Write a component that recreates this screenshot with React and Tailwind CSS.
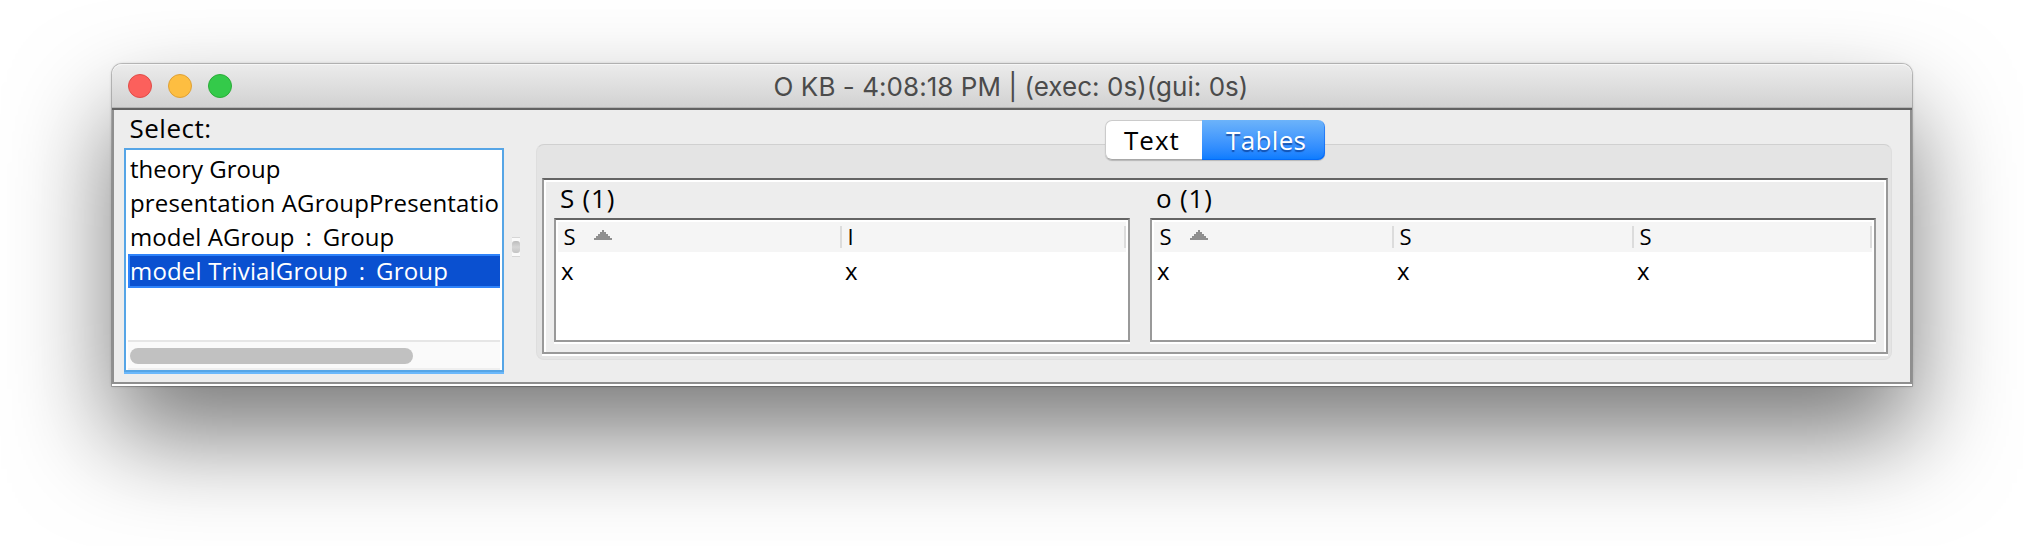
const items = [
  { label: "theory Group", cls: "" },
  { label: "presentation AGroupPresentatio", cls: "tracking-[0.17px]" },
  { label: "model AGroup", type: "Group", cls: "tracking-[0.1px]" },
  { label: "model TrivialGroup", type: "Group", cls: "tracking-[0.17px]", selected: true },
];

const tables = [
  {
    title: "S (1)",
    width: "w-[576px]",
    columns: [
      { name: "S", value: "x", width: "w-[284px]", sorted: true },
      { name: "I", value: "x", width: "w-[284px]" },
    ],
  },
  {
    title: "o (1)",
    width: "w-[726px]",
    columns: [
      { name: "S", value: "x", width: "w-[240px]", sorted: true },
      { name: "S", value: "x", width: "w-[240px]" },
      { name: "S", value: "x", width: "w-[238px]" },
    ],
  },
];

function TitleBar() {
  return (
    <div className="grid h-[46px] w-full shrink-0 grid-cols-[1fr_auto_1fr] items-center rounded-t-[10px] border-b-2 border-[#626262] bg-linear-to-b from-[#ececec] to-[#d1d1d1] shadow-[inset_0_1px_0_#f6f6f6,inset_0_-1px_0_#b4b4b4]">
      <div className="flex gap-4 pl-4">
        <span className="size-6 rounded-full border border-[#e04c48] bg-[#fc605c]" />
        <span className="size-6 rounded-full border border-[#dfa136] bg-[#fdbe41]" />
        <span className="size-6 rounded-full border border-[#2bac38] bg-[#34ca4a]" />
      </div>
      <div className="whitespace-nowrap pt-px pr-[2px] font-['Inter',sans-serif] text-[26px] leading-[40px] tracking-[0.05px] text-[#4b4b4b]">
        O KB - 4:08:18 PM | (exec: 0s)(gui: 0s)
      </div>
      <div />
    </div>
  );
}

function SelectPane() {
  return (
    <div className="flex w-[380px] shrink-0 flex-col">
      <div className="mb-[2px] h-9 pl-[5.5px] text-[26px] leading-9 tracking-[0.5px]">Select:</div>
      <div className="flex h-[224px] flex-col border-2 border-[#56a5e6] bg-white px-[2px] pt-[2px] shadow-[0_2px_0_#6bb8fb]">
        <div className="flex h-[188px] flex-col">
          {items.map((it) => (
            <div
              key={it.label}
              className={
                it.selected
                  ? "h-[34px] overflow-hidden border-y-2 border-l-2 border-[#2f83fa] bg-[#0a50d0] text-[24px] leading-[30px] whitespace-nowrap text-white"
                  : "h-[34px] overflow-hidden pl-[2px] text-[24px] leading-[34px] whitespace-nowrap"
              }
            >
              <span className={it.cls}>
                {it.label}
                {it.type && (
                  <>
                    {" "}
                    <span className="mx-[4.5px]">:</span> {it.type}
                  </>
                )}
              </span>
            </div>
          ))}
        </div>
        <div className="h-[30px] border-t-2 border-b-2 border-t-[#e6e6e6] border-b-[#efefef] bg-[#fafafa] pt-[6px] pl-[2px]">
          <div className="h-4 w-[283px] rounded-full bg-[#c1c1c1]" />
        </div>
      </div>
    </div>
  );
}

function Splitter() {
  return (
    <div className="flex w-8 shrink-0 flex-col items-start pt-[127px] pl-2">
      <div className="flex h-5 w-2 flex-col justify-center border-y border-[#d6d6d6] bg-[#fafafa]">
        <div className="h-3 w-2 rounded-[3px] bg-linear-to-b from-[#bcbcbc] via-[#d6d6d6] to-[#c4c4c4]" />
      </div>
    </div>
  );
}

function DataTable({ title, width, columns }) {
  return (
    <div className={"flex shrink-0 flex-col " + width}>
      <div className="mb-[2px] h-9 pl-[6px] text-[26px] leading-9 tracking-[0.8px]">{title}</div>
      <div className="h-[124px] border-2 border-[#999] border-t-[#646464] bg-white p-[2px] shadow-[0_2px_0_#fff]">
        <div className="flex h-[30px] bg-[#f5f5f5]">
          {columns.map((c, i) => (
            <div key={i} className={"flex shrink-0 justify-between " + c.width}>
              <div className="flex pl-[5.5px] text-[22px] leading-7">
                {c.name}
                {c.sorted && (
                  <svg className="mt-2 ml-[18px]" width="18" height="10" viewBox="0 0 18 10" shapeRendering="crispEdges" fill="#8f8f8f">
                    <path d="M8 0h2v2h2v2h2v2h2v2h2v2H0V8h2V6h2V4h2V2h2z" />
                  </svg>
                )}
              </div>
              <div className="mt-1 h-[22px] w-[2px] bg-[#dcdcdc]" />
            </div>
          ))}
        </div>
        <div className="flex text-[24px] leading-[38px]">
          {columns.map((c, i) => (
            <div key={i} className={"shrink-0 pl-[3px] " + c.width}>
              {c.value}
            </div>
          ))}
        </div>
      </div>
    </div>
  );
}

function TabbedPane() {
  return (
    <div className="mt-[34px] flex h-[216px] w-[1356px] shrink-0 flex-col rounded-lg border border-[#dedede] border-t-[#d0d0d0] bg-[#e4e4e4] pl-[5px]">
      <div className="flex h-[33px] pl-[563px]">
        <div className="-mt-[25px] flex h-10 shrink-0 rounded-[7px] text-[26px] leading-10 shadow-[0_1px_1px_rgba(0,0,0,0.2)]">
          <div className="w-[97px] rounded-l-[7px] border border-r-0 border-[#cbcbcb] border-b-[#a8a8a8] bg-white pl-[18px] leading-[38px] tracking-[1px]">
            Text
          </div>
          <div className="w-[123px] rounded-r-[7px] bg-linear-to-b from-[#6cb3fa] to-[#067bff] pl-6 tracking-[0.35px] text-white shadow-[inset_-1px_-1px_0_rgba(0,90,240,0.5)] [text-shadow:0_2px_1px_rgba(0,40,120,0.6)]">
            Tables
          </div>
        </div>
      </div>
      <div className="flex h-[176px] w-[1346px] gap-5 border-2 border-[#999] border-t-[#646464] bg-[#ededed] pl-[10px] shadow-[inset_0_2px_0_#fff,inset_2px_0_0_#fff,inset_-2px_0_0_#fff,0_2px_0_#fff]">
        {tables.map((t) => (
          <DataTable key={t.title} {...t} />
        ))}
      </div>
    </div>
  );
}

export default function App() {
  return (
    <div className="h-[546px] w-[2024px] overflow-hidden bg-white px-28 pt-16 font-['Open_Sans','Noto_Sans',sans-serif] text-black">
      <div className="flex h-[322px] w-[1800px] flex-col rounded-t-[10px] shadow-[0_0_0_1px_rgba(0,0,0,0.16),0_0_3px_rgba(0,0,0,0.3),0_50px_100px_rgba(0,0,0,0.53)]">
        <TitleBar />
        <div className="flex h-[274px] shrink-0 border-x-2 border-b-2 border-[#8f8f8f] bg-[#ededed] pl-[10px]">
          <SelectPane />
          <Splitter />
          <TabbedPane />
        </div>
        <div className="h-[2px] shrink-0 bg-white" />
      </div>
    </div>
  );
}
